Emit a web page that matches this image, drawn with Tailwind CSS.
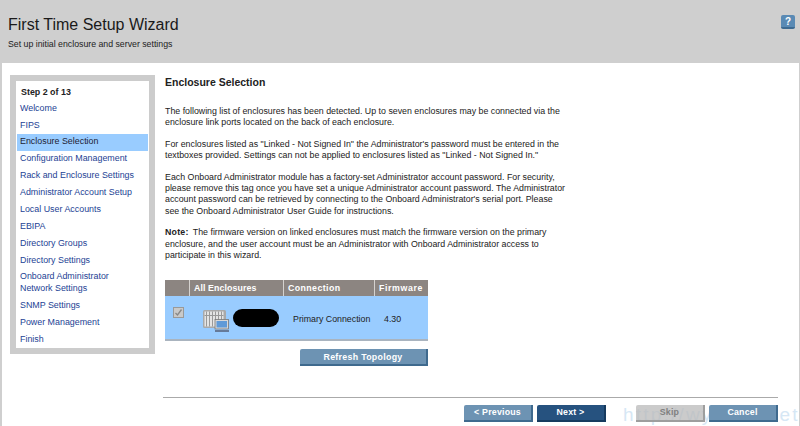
<!DOCTYPE html>
<html lang="en">
<head>
    <meta charset="UTF-8">
    <title>First Time Setup Wizard</title>
    <script src="https://cdn.jsdelivr.net/npm/@tailwindcss/browser@4"></script>
</head>
<body class="w-[800px] h-[426px] overflow-hidden bg-[#cfcfcf] font-['Liberation_Sans',Arial,sans-serif] text-[#222]">
    <!-- Title bar -->
    <header class="h-[63px] relative pl-2 pt-[14px]">
        <h1 class="text-[16px] leading-[22px] text-[#1a1a1a]">First Time Setup Wizard</h1>
        <p class="text-[8.75px] leading-[11px] mt-[3px]">Set up initial enclosure and server settings</p>
        <div class="absolute left-[781px] top-[15px] w-[14px] h-[14px] rounded-[2px] bg-[#5a8ab4] border-b-2 border-[#3d6a91] text-white text-[10px] font-bold leading-[13px] text-center">?</div>
    </header>

    <div class="relative ml-[2px] mr-px h-[363px] bg-white flex">
        <!-- Steps -->
        <nav class="ml-2 mt-3 w-[145px] h-[279px] bg-[#cccccc] p-[6px] shrink-0">
            <div class="h-full bg-white px-px pt-[5px] text-[8.9px] leading-[11.5px] text-[#1d3f94]">
                <p class="pl-[4px] h-[14px] pt-[1px] font-bold text-[#222]">Step 2 of 13</p>
                <a class="block pl-[3px] py-[2.7px]">Welcome</a>
                <a class="block pl-[3px] py-[2.7px]">FIPS</a>
                <a class="block pl-[3px] py-[2.7px] bg-[#99ccff] text-[#223]">Enclosure Selection</a>
                <a class="block pl-[3px] py-[2.7px]">Configuration Management</a>
                <a class="block pl-[3px] py-[2.7px]">Rack and Enclosure Settings</a>
                <a class="block pl-[3px] py-[2.7px]">Administrator Account Setup</a>
                <a class="block pl-[3px] py-[2.7px]">Local User Accounts</a>
                <a class="block pl-[3px] py-[2.7px]">EBIPA</a>
                <a class="block pl-[3px] py-[2.7px]">Directory Groups</a>
                <a class="block pl-[3px] py-[2.7px]">Directory Settings</a>
                <a class="block pl-[3px] py-[2.7px]">Onboard Administrator<br>Network Settings</a>
                <a class="block pl-[3px] py-[2.7px]">SNMP Settings</a>
                <a class="block pl-[3px] py-[2.7px]">Power Management</a>
                <a class="block pl-[3px] py-[2.7px]">Finish</a>
            </div>
        </nav>

        <!-- Main content -->
        <main class="ml-2 w-[615px] pt-[13px] text-[8.82px] leading-[11.3px]">
            <div class="pl-[2px] w-[405px]">
                <h2 class="text-[10.5px] leading-[13px] font-bold mb-[17px]">Enclosure Selection</h2>
                <p class="mb-[10.3px]">The following list of enclosures has been detected. Up to seven enclosures may be connected via the enclosure link ports located on the back of each enclosure.</p>
                <p class="mb-[10.3px]">For enclosures listed as "Linked - Not Signed In" the Administrator's password must be entered in the textboxes provided. Settings can not be applied to enclosures listed as "Linked - Not Signed In."</p>
                <p class="mb-[10.3px]">Each Onboard Administrator module has a factory-set Administrator account password. For security, please remove this tag once you have set a unique Administrator account password. The Administrator account password can be retrieved by connecting to the Onboard Administrator's serial port. Please see the Onboard Administrator User Guide for instructions.</p>
                <p><b class="mr-[2px] tracking-[0.2px]">Note:</b> The firmware version on linked enclosures must match the firmware version on the primary enclosure, and the user account must be an Administrator with Onboard Administrator access to participate in this wizard.</p>
            </div>

            <!-- Enclosure table -->
            <div class="ml-[2px] mt-[19px] w-[263px] border-b-2 border-[#aab4bf]">
                <div class="flex h-[16px] bg-[#8c8581] text-white font-bold leading-[16px]">
                    <div class="w-[25px] border-r border-[#d5d2cf]"></div>
                    <div class="w-[94px] pl-[4px] border-r border-[#d5d2cf] tracking-[0.1px]">All Enclosures</div>
                    <div class="w-[91px] pl-[4px] border-r border-[#d5d2cf] tracking-[0.4px]">Connection</div>
                    <div class="flex-1 pl-[4px] tracking-[0.6px]">Firmware</div>
                </div>
                <div class="flex items-center h-[43px] bg-[#99ccff]">
                    <div class="w-[25px] pl-[8px] pb-[10px]">
                        <div class="w-[11px] h-[11px] bg-[#c9c9c9] border border-[#999] flex items-center justify-center">
                            <svg width="9" height="9" viewBox="0 0 9 9" fill="none"><path d="M1.5 5 L3.5 7 L7.5 1.5" stroke="#888" stroke-width="1.3"/></svg>
                        </div>
                    </div>
                    <div class="w-[94px] flex items-center pl-[13px] mt-[6px]">
                        <svg width="26" height="22" viewBox="0 0 26 22" class="shrink-0">
                            <rect x="0" y="0" width="23" height="18" rx="1.5" fill="#a9a9a9"/>
                            <rect x="1.5" y="1.5" width="19" height="15" fill="#e4e4e4"/>
                            <path d="M3.5 1.5V16.5M6.5 1.5V16.5M9.5 1.5V16.5M12.5 1.5V16.5M15.5 1.5V16.5M18.5 1.5V16.5M1.5 5.5H20.5" stroke="#999" stroke-width="1"/>
                            <rect x="12" y="9.5" width="13.5" height="9.5" fill="#d8d8d8" stroke="#777" stroke-width="0.8"/>
                            <rect x="13.5" y="11" width="10.5" height="6.5" fill="#5f9ad8"/>
                            <path d="M12 21H26" stroke="#445" stroke-width="1.2"/>
                        </svg>
                        <div class="ml-[4px] w-[46px] h-[18px] rounded-full bg-black -mt-[6px] shrink-0"></div>
                    </div>
                    <div class="w-[91px] pl-[9px] pt-[3px]">Primary Connection</div>
                    <div class="flex-1 pl-[9px] pt-[3px]">4.30</div>
                </div>
            </div>

            <div class="ml-[137px] mt-[8px] w-[128px] h-[17px] rounded-tl-[2px] bg-[#6d93b3] border-r-2 border-b-2 border-[#3f6a8e] text-white font-bold tracking-[0.3px] leading-[16px] text-center">Refresh Topology</div>

            <div class="mt-[31px] border-t border-[#aaa]"></div>

            <!-- Wizard buttons -->
            <div class="relative flex mt-[7px] h-[17px] text-white font-bold tracking-[0.2px] leading-[15px] text-center">
                <div class="absolute left-[460px] -top-[2px] text-[19px] leading-[24px] font-normal tracking-[2.2px] text-[#d6e7f5] text-left whitespace-nowrap">http://wy<span class="ml-[66px]">et</span></div>
                <div class="ml-[301px] w-[69px] rounded-tl-[2px] bg-[#6d93b3] border-r-2 border-b-2 border-[#3f6a8e]">&lt; Previous</div>
                <div class="ml-[4px] w-[69px] rounded-tl-[2px] bg-[#26527f] border-r-2 border-b-2 border-[#163a5e]">Next &gt;</div>
                <div class="relative ml-[30px] w-[69px] rounded-tl-[2px] bg-[#b9b9b9]/75 border-r-2 border-b-2 border-[#999]/90 text-[#808080]">Skip</div>
                <div class="relative ml-[4px] w-[69px] rounded-tl-[2px] bg-[#6d93b3] border-r-2 border-b-2 border-[#3f6a8e]">Cancel</div>
            </div>
        </main>
    </div>
</body>
</html>
